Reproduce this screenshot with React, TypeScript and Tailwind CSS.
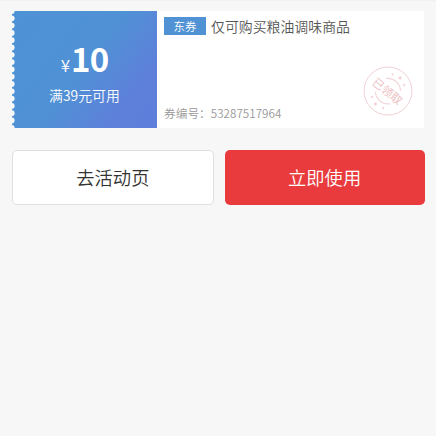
const notches = Array.from({ length: 17 }, (_, i) => i * 7.3);

function Star({ x, y, r }: { x: number; y: number; r: number }) {
  return (
    <path
      transform={`translate(${x} ${y}) scale(${r}) rotate(20)`}
      d="M0-1 .25-.35.95-.3.4.15.6.8 0 .45-.6.8-.4.15-.95-.3-.25-.35Z"
    />
  );
}

function Stamp() {
  return (
    <svg className="absolute top-[55px] left-[206px] size-[50px]" viewBox="0 0 50 50" fill="#f2cfd2">
      <circle cx="25" cy="25" r="24" fill="none" stroke="#eed2d4" strokeWidth="1" />
      <g fill="none" stroke="#f2d8da" strokeWidth="1.2">
        <path d="M23 12.5A12.8 12.8 0 0 1 37.5 25" />
        <path d="M12.4 25.5A12.8 12.8 0 0 0 27 37.8" />
      </g>
      <Star x={29.5} y={8.5} r={1.6} />
      <Star x={37} y={12} r={2.4} />
      <Star x={41} y={19} r={1.7} />
      <Star x={9} y={31} r={1.7} />
      <Star x={12.5} y={38} r={2.4} />
      <Star x={20} y={42} r={1.7} />
      <text
        transform="translate(24.4 25.4) rotate(39)"
        textAnchor="middle"
        y="4.2"
        className="font-['Noto_Sans_CJK_SC',sans-serif] text-[11.5px] font-normal"
        fill="#edbfc3"
      >
        已领取
      </text>
    </svg>
  );
}

export default function App() {
  return (
    <main className="h-[436px] w-[436px] overflow-hidden border-t border-[#f1f1f1] bg-[#f7f7f7] px-3 pt-2.5 font-['Noto_Sans_CJK_SC',sans-serif] font-[350]">
      <section className="flex h-[117px] w-[412px] bg-white">
        <div className="relative flex w-[145px] flex-col items-center bg-[linear-gradient(127deg,#4e93d5_0%,#5091d5_48%,#5e7fda_80%,#5e7edb_100%)] text-white">
          <svg className="absolute top-0 left-0 h-[117px] w-1" viewBox="0 0 4 117" fill="#f7f9fa">
            {notches.map((y) => (
              <circle key={y} cx="-.3" cy={y} r="2.9" />
            ))}
          </svg>
          <div className="mt-[27px] flex h-10 items-baseline leading-10">
            <span className="mr-px text-[17px]">¥</span>
            <span className="text-[33px] font-bold tracking-[-0.8px]">10</span>
          </div>
          <p className="mt-[7px] text-[13.9px] leading-5">满39元可用</p>
        </div>
        <div className="relative flex flex-1 flex-col justify-between pt-[5px] pb-1.5 pl-[7px]">
          <div className="flex items-center">
            <span className="flex h-[18px] w-[42px] items-center justify-center bg-[#5092d3] text-[11.5px] leading-[18px] text-white">
              东券
            </span>
            <span className="ml-[5px] text-[13.9px] leading-5 text-[#555]">仅可购买粮油调味商品</span>
          </div>
          <p className="text-[11.7px] leading-[18px] text-[#999]">券编号：53287517964</p>
          <Stamp />
        </div>
      </section>
      <div className="mt-[22px] flex w-[412.5px] gap-[11px]">
        <button className="h-[54.5px] flex-1 rounded-[5px] border border-[#dedfdf] bg-white text-[18.3px] text-[#333]">
          去活动页
        </button>
        <button className="h-[54.5px] flex-1 rounded-[5px] bg-[#e93b3d] text-[18.3px] text-white">立即使用</button>
      </div>
    </main>
  );
}
